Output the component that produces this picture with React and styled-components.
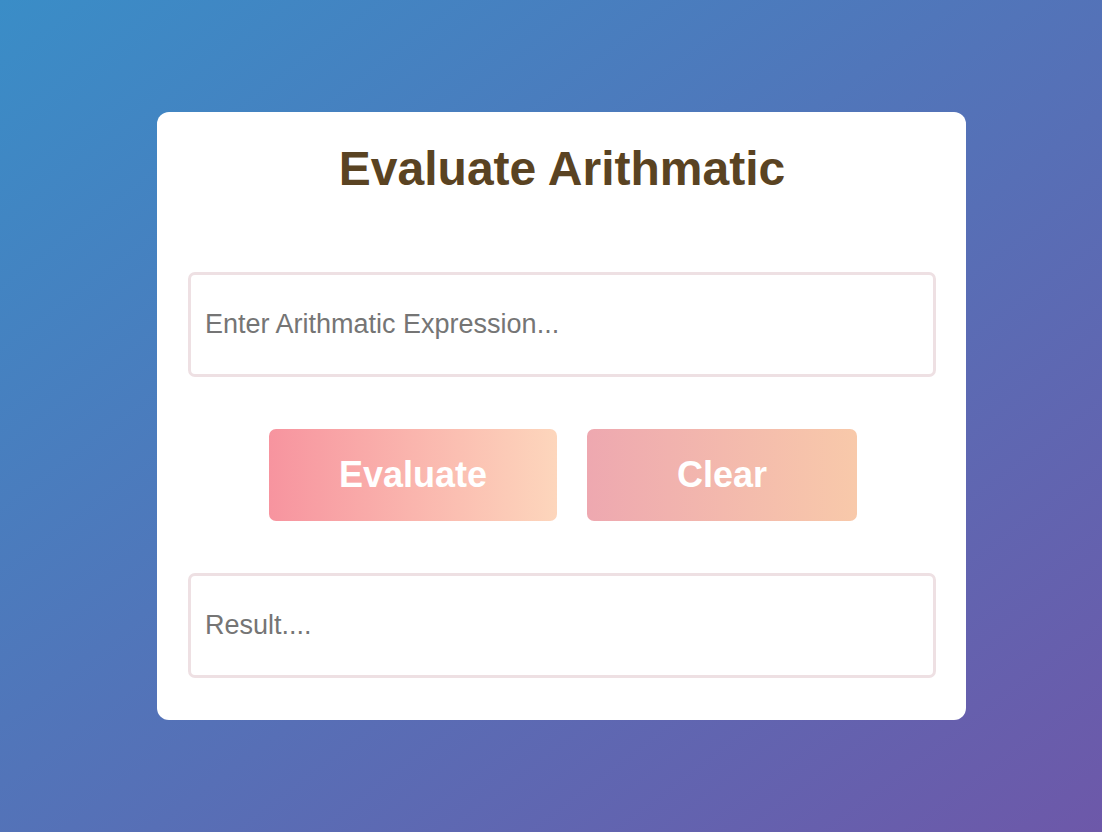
import React, { useState } from "react";
import styled, { createGlobalStyle } from "styled-components";

const Global = createGlobalStyle`
  * { box-sizing: border-box; }
  body {
    margin: 0;
    font-family: "Liberation Sans", Arial, sans-serif;
  }
`;

const Page = styled.div`
  min-height: 100vh;
  display: flex;
  justify-content: center;
  align-items: center;
  padding-left: 21px;
  background: linear-gradient(to bottom right, #3a8dc7, #6d58a9);
`;

const Card = styled.div`
  width: 809px;
  height: 608px;
  background: #fff;
  border-radius: 12px;
  padding: 30px 30px 0 31px;
  display: flex;
  flex-direction: column;
`;

const Title = styled.h1`
  margin: 2px 0 0;
  text-align: center;
  font-size: 48px;
  line-height: 50px;
  font-weight: 700;
  color: #5a4322;
`;

const Box = styled.input`
  width: 748px;
  height: 105px;
  flex-shrink: 0;
  margin-top: ${(p) => p.$top}px;
  border: 3px solid #eee0e3;
  border-radius: 7px;
  padding: 0 14px;
  font-family: "Liberation Sans", Arial, sans-serif;
  font-size: 27px;
  color: #333;
  outline: none;
  &::placeholder {
    color: #757575;
  }
`;

const BtnRow = styled.div`
  display: flex;
  justify-content: center;
  gap: 30px;
  margin-top: 52px;
  padding-left: 2px;
`;

const Button = styled.button`
  width: ${(p) => p.$w}px;
  height: 92px;
  border: none;
  border-radius: 7px;
  background: ${(p) => p.$bg};
  color: #fff;
  font-family: "Liberation Sans", Arial, sans-serif;
  font-size: 36px;
  font-weight: 700;
  cursor: pointer;
`;

export default function App() {
  const [expr, setExpr] = useState("");
  const [result, setResult] = useState("");

  return (
    <>
      <Global />
      <Page>
        <Card>
          <Title>Evaluate Arithmatic</Title>
          <Box
            $top={78}
            placeholder="Enter Arithmatic Expression..."
            value={expr}
            onChange={(e) => setExpr(e.target.value)}
          />
          <BtnRow>
            <Button $w={288} $bg="linear-gradient(to right, #f7949f, #fdd6bc)">
              Evaluate
            </Button>
            <Button
              $w={270}
              $bg="linear-gradient(to right, #eea8b0, #f8c9aa)"
              onClick={() => {
                setExpr("");
                setResult("");
              }}
            >
              Clear
            </Button>
          </BtnRow>
          <Box $top={52} placeholder="Result...." value={result} readOnly />
        </Card>
      </Page>
    </>
  );
}
